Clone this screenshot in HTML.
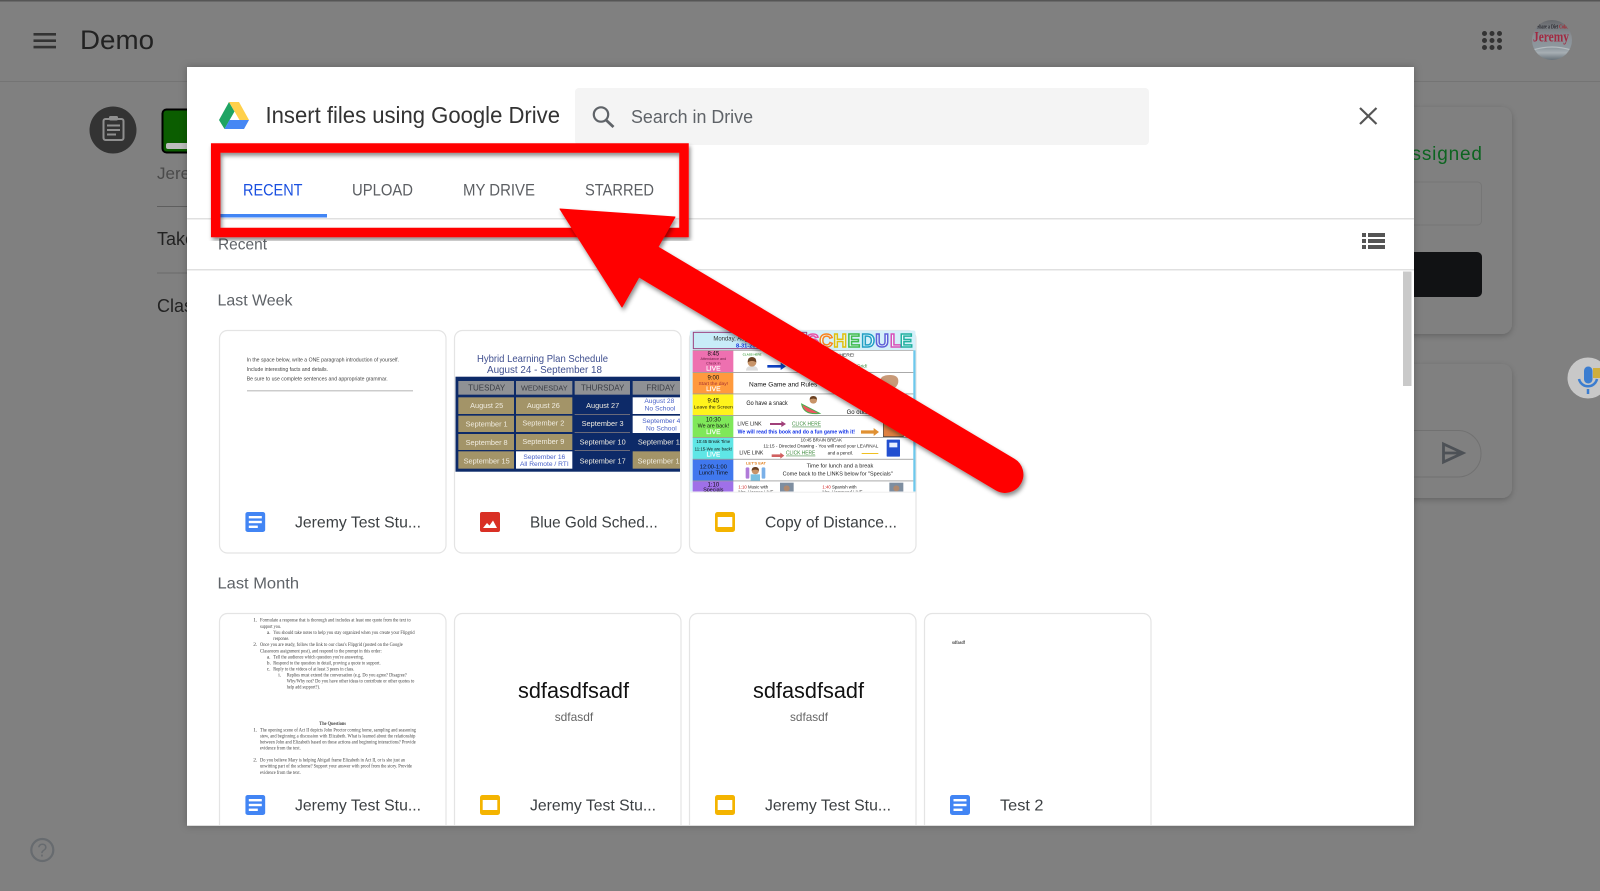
<!DOCTYPE html>
<html lang="en">
<head>
<meta charset="utf-8">
<title>Insert files using Google Drive</title>
<style>
html,body{margin:0;padding:0;width:1600px;height:891px;overflow:hidden;background:#808080}
svg{display:block;font-family:"Liberation Sans",sans-serif}
</style>
</head>
<body>
<svg xmlns="http://www.w3.org/2000/svg" width="1600" height="891" viewBox="0 0 1600 891">
<defs>
<filter id="sh" x="-10%" y="-10%" width="120%" height="120%"><feDropShadow dx="1.5" dy="3" stdDeviation="2" flood-color="#000" flood-opacity=".45"/></filter>
<filter id="cs" x="-10%" y="-10%" width="120%" height="120%"><feDropShadow dx="0" dy="2" stdDeviation="3" flood-color="#000" flood-opacity=".22"/></filter>
<filter id="ds" x="-5%" y="-5%" width="110%" height="110%"><feDropShadow dx="0" dy="0" stdDeviation="4" flood-color="#000" flood-opacity=".25"/></filter>
<filter id="soft" x="-2%" y="-2%" width="104%" height="104%"><feGaussianBlur stdDeviation=".35"/></filter>
<clipPath id="dlg"><rect x="187" y="67" width="1227" height="758.500"/></clipPath>
<clipPath id="c2"><path d="M454 376h226v96h-226z"/></clipPath>
<clipPath id="c3"><path d="M29 515V39q0-8 8-8H699q8 0 8 8V515z"/></clipPath>
<clipPath id="av"><circle cx="1552" cy="40" r="20"/></clipPath>
<linearGradient id="ag" x1="0" y1="0" x2="0" y2="1"><stop offset="0" stop-color="#66686c"/><stop offset=".4" stop-color="#8a8f94"/><stop offset=".7" stop-color="#8e989f"/><stop offset=".82" stop-color="#a6aeb3"/><stop offset="1" stop-color="#667078"/></linearGradient>
<symbol id="doc" viewBox="0 0 20 20"><rect width="20" height="20" rx="2.500" fill="#4285f4"/><rect x="3.500" y="4" width="13" height="2.400" fill="#fff"/><rect x="3.500" y="8.800" width="13" height="2.400" fill="#fff"/><rect x="3.500" y="13.600" width="9" height="2.400" fill="#fff"/></symbol>
<symbol id="sl" viewBox="0 0 20 20"><rect width="20" height="20" rx="2.500" fill="#f4b400"/><rect x="2.700" y="5" width="14.600" height="10" fill="#fff"/></symbol>
<symbol id="im" viewBox="0 0 20 20"><rect width="20" height="20" rx="2" fill="#d93025"/><path d="M3 16l4-5 2.500 2.500L13 8.500 17 16z" fill="#fff"/></symbol>
</defs>

<!-- page background -->
<rect width="1600" height="891" fill="#808080"/>
<rect width="1600" height="1.500" fill="#555"/>
<rect y="81" width="1600" height="1" fill="#747474"/>
<g fill="#333"><rect x="33.500" y="33" width="22.500" height="2.600"/><rect x="33.500" y="39.400" width="22.500" height="2.600"/><rect x="33.500" y="45.800" width="22.500" height="2.600"/></g>
<text x="80" y="49" font-size="27" fill="#222" textLength="74" lengthAdjust="spacingAndGlyphs">Demo</text>
<g fill="#333"><circle cx="1484.500" cy="33.500" r="2.500"/><circle cx="1492" cy="33.500" r="2.500"/><circle cx="1499.500" cy="33.500" r="2.500"/><circle cx="1484.500" cy="40.500" r="2.500"/><circle cx="1492" cy="40.500" r="2.500"/><circle cx="1499.500" cy="40.500" r="2.500"/><circle cx="1484.500" cy="47.500" r="2.500"/><circle cx="1492" cy="47.500" r="2.500"/><circle cx="1499.500" cy="47.500" r="2.500"/></g>
<circle cx="1552" cy="40" r="20" fill="url(#ag)"/>
<g clip-path="url(#av)"><path d="M1533 50q19 -6 38 0" stroke="#b5bcc0" stroke-width="1.200" fill="none"/><text x="1537" y="28.500" font-size="6" font-weight="bold" font-family="'Liberation Serif',serif" fill="#2a2a30" textLength="31" lengthAdjust="spacingAndGlyphs">Share a Diet <tspan fill="#a8242e">Coke</tspan></text><text x="1533" y="41.500" font-size="15" font-weight="bold" font-family="'Liberation Serif',serif" fill="#a02a42" textLength="36" lengthAdjust="spacingAndGlyphs">Jeremy</text></g>

<circle cx="113" cy="130" r="23.500" fill="#333"/>
<g fill="none" stroke="#8f8f8f" stroke-width="2"><rect x="103.500" y="119" width="20" height="21" rx="2"/></g>
<rect x="109" y="116" width="9" height="4.500" rx="1.500" fill="#8f8f8f"/>
<g fill="#8f8f8f"><rect x="107" y="124.500" width="13" height="2"/><rect x="107" y="129" width="13" height="2"/><rect x="107" y="133.500" width="9" height="2"/></g>
<rect x="162.500" y="109.500" width="40" height="43" rx="4" fill="#0b5d00" stroke="#000" stroke-width="2"/>
<rect x="166" y="143" width="34" height="6" rx="2" fill="#bdbdbd"/>
<text x="157" y="179" font-size="17" fill="#4a4a4a">Jeremy</text>
<rect x="157" y="206" width="40" height="1" fill="#5e5e5e"/>
<text x="157" y="245" font-size="18" fill="#222">Take</text>
<rect x="157" y="272.500" width="40" height="1" fill="#6a6a6a"/>
<text x="157" y="312" font-size="18" fill="#222">Class</text>

<circle cx="42.300" cy="850" r="11" fill="none" stroke="#676b6f" stroke-width="2.200"/>
<text x="42.300" y="856.500" font-size="18" fill="#676b6f" text-anchor="middle">?</text>

<!-- right cards -->
<rect x="1380" y="107" width="132" height="227" rx="10" fill="#808080" filter="url(#cs)"/>
<text x="1398" y="160" font-size="19" fill="#0d6420" textLength="84" lengthAdjust="spacing">Assigned</text>
<rect x="1390" y="182" width="91.500" height="43" rx="4" fill="none" stroke="#767676"/>
<rect x="1390" y="252" width="92" height="45" rx="5" fill="#111214"/>
<rect x="1380" y="364" width="132" height="134" rx="10" fill="#808080" filter="url(#cs)"/>
<rect x="1380" y="430.500" width="101" height="46.500" rx="23" fill="none" stroke="#717171"/>
<path d="M1443.500 444L1463 453L1443.500 462ZM1443.500 453H1463" fill="none" stroke="#4d5156" stroke-width="2.800" stroke-linejoin="miter"/>
<circle cx="1588" cy="378" r="20.500" fill="#c8c8c8"/>
<rect x="1593" y="368" width="7" height="10" fill="#cfae3d"/>
<rect x="1584" y="366.500" width="8.500" height="17" rx="4.250" fill="#3b7dd0"/>
<path d="M1579 379a9.200 9.200 0 0 0 18 0M1588 389v5" fill="none" stroke="#3b7dd0" stroke-width="2.500"/>

<!-- dialog -->
<rect x="187" y="67" width="1227" height="759" fill="#fff" filter="url(#ds)"/>
<g clip-path="url(#dlg)">
<path d="M229 102L234.500 111.500L224.500 129L219 120Z" fill="#1fa463"/>
<path d="M229 102H239L249 120H239.500Z" fill="#ffd04b"/>
<path d="M229.500 120H249L244 129H224.500Z" fill="#4687f4"/>
<text x="265.500" y="123" font-size="23" fill="#333" textLength="294.500" lengthAdjust="spacingAndGlyphs">Insert files using Google Drive</text>
<rect x="575" y="88" width="574" height="57" rx="4" fill="#f4f4f4"/>
<circle cx="601" cy="114.500" r="7.200" fill="none" stroke="#5f6368" stroke-width="2.200"/>
<path d="M606 120L613.500 127" stroke="#5f6368" stroke-width="2.800"/>
<text x="631" y="123" font-size="18" fill="#5f6368" textLength="122" lengthAdjust="spacingAndGlyphs">Search in Drive</text>
<path d="M1360 108L1376.500 124M1376.500 108L1360 124" stroke="#555" stroke-width="2.200"/>

<g font-size="17" fill="#5c5f63">
<text x="243" y="195.500" fill="#1a50e0" textLength="59.500" lengthAdjust="spacingAndGlyphs">RECENT</text>
<text x="352" y="195.500" textLength="61" lengthAdjust="spacingAndGlyphs">UPLOAD</text>
<text x="463" y="195.500" textLength="72" lengthAdjust="spacingAndGlyphs">MY DRIVE</text>
<text x="585" y="195.500" textLength="69" lengthAdjust="spacingAndGlyphs">STARRED</text>
</g>
<rect x="187" y="218" width="1227" height="1.500" fill="#e0e0e0"/>
<rect x="220" y="214" width="107" height="3.500" fill="#4285f4"/>
<text x="218" y="249.500" font-size="16" fill="#5f6368" textLength="49" lengthAdjust="spacingAndGlyphs">Recent</text>
<g fill="#555"><rect x="1362" y="233" width="4" height="4"/><rect x="1368" y="233" width="17" height="4"/><rect x="1362" y="239" width="4" height="4"/><rect x="1368" y="239" width="17" height="4"/><rect x="1362" y="245" width="4" height="4"/><rect x="1368" y="245" width="17" height="4"/></g>
<rect x="187" y="269" width="1227" height="1.500" fill="#e0e0e0"/>
<rect x="1403" y="271.500" width="8.500" height="114.500" fill="#c9c9c9"/>

<g font-size="16" fill="#5f6368">
<text x="217.500" y="305.500" textLength="75" lengthAdjust="spacingAndGlyphs">Last Week</text>
<text x="217.500" y="588.500" textLength="81.500" lengthAdjust="spacingAndGlyphs">Last Month</text>
</g>

<!-- cards outlines -->
<g fill="#fff" stroke="#e4e4e4" stroke-width="1.200">
<rect x="219.500" y="330.500" width="226.500" height="222.500" rx="8"/>
<rect x="454.500" y="330.500" width="226.500" height="222.500" rx="8"/>
<rect x="689.500" y="330.500" width="226.500" height="222.500" rx="8"/>
<rect x="219.500" y="613.500" width="226.500" height="240" rx="8"/>
<rect x="454.500" y="613.500" width="226.500" height="240" rx="8"/>
<rect x="689.500" y="613.500" width="226.500" height="240" rx="8"/>
<rect x="924.500" y="613.500" width="226.500" height="240" rx="8"/>
</g>

<!-- card 1 preview -->
<g font-size="5.500" fill="#444" filter="url(#soft)">
<text x="246.700" y="361.700" textLength="152.300" lengthAdjust="spacingAndGlyphs">In the space below, write a ONE paragraph introduction of yourself.</text>
<text x="246.700" y="371" textLength="81.300" lengthAdjust="spacingAndGlyphs">Include interesting facts and details.</text>
<text x="246.700" y="380.500" textLength="141" lengthAdjust="spacingAndGlyphs">Be sure to use complete sentences and appropriate grammar.</text>
</g>
<rect x="247" y="390" width="166" height="1.500" fill="#ccc"/>

<!-- card 2 preview -->
<g filter="url(#soft)">
<g clip-path="url(#c2)">
<rect x="455.500" y="376.700" width="226" height="95" fill="#0e2a68"/>
</g>
<text x="477" y="362" font-size="10.500" fill="#3f4f8f" textLength="131" lengthAdjust="spacingAndGlyphs">Hybrid Learning Plan Schedule</text>
<text x="487" y="373" font-size="10.500" fill="#3f4f8f" textLength="115" lengthAdjust="spacingAndGlyphs">August 24 - September 18</text>
<g clip-path="url(#c2)"><g transform="translate(210 320) scale(.33333)" font-size="22">
<g fill="#8f9195"><rect x="745" y="183" width="167" height="41"/><rect x="918" y="183" width="169" height="41"/><rect x="1094" y="183" width="166" height="41"/><rect x="1268" y="183" width="150" height="41"/></g>
<g fill="#3a3d44" text-anchor="middle" font-size="24"><text x="830" y="211">TUESDAY</text><text x="1003" y="211" font-size="22">WEDNESDAY</text><text x="1178" y="211">THURSDAY</text><text x="1352" y="211">FRIDAY</text></g>
<g fill="#a39468"><rect x="745" y="232" width="167" height="50"/><rect x="745" y="287" width="167" height="49"/><rect x="745" y="342" width="167" height="48"/><rect x="745" y="394" width="167" height="52"/><rect x="918" y="232" width="169" height="50"/><rect x="918" y="287" width="169" height="49"/><rect x="918" y="342" width="169" height="48"/><rect x="1268" y="394" width="150" height="52"/></g>
<g fill="#fff"><rect x="918" y="394" width="169" height="52"/><rect x="1268" y="232" width="150" height="50"/><rect x="1268" y="287" width="150" height="52"/></g>
<g fill="#6a6a7a"><rect x="1094" y="282" width="166" height="3"/><rect x="1094" y="336" width="166" height="3"/><rect x="1094" y="390" width="166" height="3"/></g>
<g fill="#f0ece0" text-anchor="middle">
<text x="830" y="264">August 25</text><text x="830" y="319">September 1</text><text x="830" y="375">September 8</text><text x="830" y="431">September 15</text>
<text x="1000" y="264">August 26</text><text x="1000" y="317">September 2</text><text x="1000" y="372">September 9</text>
<text x="1178" y="264">August 27</text><text x="1178" y="318">September 3</text><text x="1178" y="374">September 10</text><text x="1178" y="431">September 17</text>
<text x="1352" y="374">September 11</text><text x="1352" y="431">September 18</text>
</g>
<g fill="#4a62c8" text-anchor="middle" font-size="20">
<text x="1348" y="249">August 28</text><text x="1350" y="271">No School</text><text x="1354" y="309">September 4</text><text x="1354" y="332">No School</text><text x="1003" y="417">September 16</text><text x="1003" y="438">All Remote / RTI</text>
</g>
</g></g>
</g>

<!-- card 3 preview -->
<g filter="url(#soft)">
<g transform="translate(680 320) scale(.33333)" clip-path="url(#c3)">
<rect x="29" y="31" width="678" height="484" fill="#d5f0fa"/>
<rect x="40" y="37" width="340" height="49" fill="#c8ecf8" stroke="#9a3f7d" stroke-width="3"/>
<text x="100" y="62" font-size="18" fill="#333">Monday, August 31</text>
<text x="168" y="82" font-size="17" font-weight="bold" fill="#1030e0">8-31-20</text>
<g font-size="56" font-weight="bold" fill="#eafafd" stroke-width="4.500">
<text x="380" y="81" stroke="#e84fa6">S</text><text x="418" y="81" stroke="#f88520">C</text><text x="460" y="81" stroke="#e0c010">H</text><text x="503" y="81" stroke="#3fbb50">E</text><text x="544" y="81" stroke="#209fc4">D</text><text x="586" y="81" stroke="#5f5fd8">U</text><text x="630" y="81" stroke="#d850b8">L</text><text x="660" y="81" stroke="#20b0a0">E</text>
</g>
<rect x="38" y="91" width="662" height="424" fill="#fff"/>
<rect x="700" y="91" width="7" height="424" fill="#6cc8ec"/>
<rect x="38" y="92" width="122" height="65" fill="#ee70b0"/>
<rect x="38" y="158" width="122" height="63" fill="#ff9a3c"/>
<rect x="38" y="222" width="122" height="64" fill="#fff31a"/>
<rect x="38" y="287" width="122" height="65" fill="#7fe85a"/>
<rect x="38" y="353" width="122" height="64" fill="#5fe6e6"/>
<rect x="38" y="418" width="122" height="64" fill="#3f78ee"/>
<rect x="38" y="483" width="122" height="32" fill="#9f6fe8"/>
<g fill="#999"><rect x="38" y="90" width="662" height="2"/><rect x="38" y="156" width="662" height="2.500"/><rect x="38" y="220.500" width="662" height="2.500"/><rect x="38" y="285.500" width="662" height="2.500"/><rect x="38" y="351.500" width="662" height="2.500"/><rect x="38" y="416.500" width="662" height="2.500"/><rect x="38" y="481.500" width="662" height="2.500"/></g>
<g text-anchor="middle" fill="#111" font-size="18">
<text x="100" y="107">8:45</text><text x="100" y="120" font-size="11" fill="#6a1a40">Attendance and</text><text x="100" y="133" font-size="11" fill="#6a1a40">Check In</text><text x="100" y="151" font-size="20" fill="#fff" stroke="#fff" stroke-width=".5">LIVE</text>
<text x="100" y="178">9:00</text><text x="100" y="195" font-size="15" fill="#a33">Start the day!</text><text x="100" y="213" font-size="20" fill="#fff" stroke="#fff" stroke-width=".5">LIVE</text>
<text x="100" y="247">9:45</text><text x="100" y="265" font-size="15">Leave the Screen</text>
<text x="100" y="304">10:30</text><text x="100" y="322" font-size="16">We are back!</text><text x="100" y="342" font-size="20" fill="#fff" stroke="#fff" stroke-width=".5">LIVE</text>
<text x="100" y="369" font-size="13">10:45 Break Time</text><text x="100" y="392" font-size="13">11:15-We are back!</text><text x="100" y="410" font-size="19" fill="#fff" stroke="#fff" stroke-width=".5">LIVE</text>
<text x="100" y="445" font-size="17">12:00-1:00</text><text x="100" y="463" font-size="17">Lunch Time</text>
<text x="100" y="500">1:10</text><text x="100" y="515" font-size="16">Specials</text>
</g>
<text x="188" y="107" font-size="9" font-weight="bold" fill="#3a9a3a" textLength="57" lengthAdjust="spacingAndGlyphs">CLASS HERE</text>
<path d="M198 152q0-14 18-14t18 14z" fill="#ddd"/><circle cx="216" cy="127" r="13" fill="#c89468"/><path d="M203 127q0-16 13-16t13 16q-13-9-26 0z" fill="#6a4020"/>
<path d="M262 135h40v-7l16 11-16 11v-7h-40z" fill="#1040c0"/>
<text x="478" y="110" font-size="15" fill="#222">HERE!</text>
<text x="530" y="143" font-size="15" fill="#3a8a3a">Grid!</text>
<text x="207" y="200" font-size="20" fill="#111" textLength="205" lengthAdjust="spacingAndGlyphs">Name Game   and Rules</text>
<path d="M600 185q0-20 30-20q25 0 25 18q0 18-22 27q-22 3-33-25z" fill="#c89a78"/>
<text x="199" y="255" font-size="18" fill="#111" textLength="124" lengthAdjust="spacingAndGlyphs">Go have a snack</text>
<path d="M365 252q6 34 54 28z" fill="#ee5560" stroke="#4caf50" stroke-width="3"/><circle cx="400" cy="240" r="11" fill="#c89468"/><path d="M389 239q0-11 11-11t11 11q-11-6-22 0z" fill="#6a4020"/>
<text x="500" y="282" font-size="18" fill="#111">Go outside</text>
<text x="172" y="317" font-size="17" fill="#222" textLength="73" lengthAdjust="spacingAndGlyphs">LIVE LINK</text>
<path d="M270 309h34v-6l14 9-14 9v-6h-34z" fill="#a0407a"/>
<text x="336" y="317" font-size="17" fill="#3a8a3a" text-decoration="underline" textLength="87" lengthAdjust="spacingAndGlyphs">CLICK HERE</text>
<text x="173" y="341" font-size="17" font-weight="bold" fill="#1030e8" textLength="352" lengthAdjust="spacingAndGlyphs">We will read this book and do a fun game with it!</text>
<path d="M543 331h38v-7l16 12-16 12v-7h-38z" fill="#e09030"/>
<rect x="610" y="295" width="60" height="55" fill="#e08040" stroke="#444" stroke-width="2"/>
<text x="362" y="364" font-size="13" fill="#222" textLength="124" lengthAdjust="spacingAndGlyphs">10:45 BRAIN BREAK</text>
<text x="250" y="383" font-size="14" fill="#222" textLength="345" lengthAdjust="spacingAndGlyphs">11:15 - Directed Drawing - You will need your LEARNAL</text>
<text x="178" y="404" font-size="17" fill="#222" textLength="72" lengthAdjust="spacingAndGlyphs">LIVE LINK</text>
<path d="M275 403h26v-5l12 9-12 9v-5h-26z" fill="#d06060"/>
<text x="318" y="404" font-size="17" fill="#3a8a3a" text-decoration="underline" textLength="88" lengthAdjust="spacingAndGlyphs">CLICK HERE</text>
<text x="443" y="404" font-size="14" fill="#222" textLength="77" lengthAdjust="spacingAndGlyphs">and a pencil.</text>
<rect x="545" y="399" width="50" height="3" fill="#f0c020"/>
<rect x="620" y="359" width="40" height="51" rx="2" fill="#2050d0"/><rect x="628" y="368" width="24" height="14" fill="#e8eeff"/>
<text x="380" y="442" font-size="17" fill="#222" textLength="200" lengthAdjust="spacingAndGlyphs">Time for lunch and a break</text>
<text x="308" y="466" font-size="17" fill="#222" textLength="330" lengthAdjust="spacingAndGlyphs">Come back to the LINKS below for "Specials"</text>
<text x="198" y="434" font-size="11" font-weight="bold" fill="#e08020" textLength="60" lengthAdjust="spacingAndGlyphs">LET'S EAT</text>
<rect x="197" y="442" width="11" height="34" rx="4" fill="#b07ad8"/><rect x="245" y="442" width="11" height="34" rx="4" fill="#7ab0e8"/>
<circle cx="226" cy="452" r="11" fill="#c89468"/><path d="M215 452q0-11 11-11t11 11q-11-6-22 0z" fill="#6a4020"/><rect x="212" y="463" width="28" height="19" fill="#7ac0e0"/>
<text x="175" y="506" font-size="13" fill="#222"><tspan fill="#d02020">1:10</tspan> Music with</text>
<text x="175" y="520" font-size="13" fill="#222">Mrs. Hansen LIVE</text>
<rect x="300" y="488" width="41" height="30" fill="#7e8ea0"/><circle cx="320" cy="505" r="9" fill="#b08a70"/>
<text x="427" y="506" font-size="13" fill="#222"><tspan fill="#d02020">1:40</tspan> Spanish with</text>
<text x="427" y="520" font-size="13" fill="#222">Mrs. Hammond LIVE</text>
<rect x="628" y="488" width="42" height="30" fill="#7e8ea0"/><circle cx="649" cy="505" r="9" fill="#b08a70"/>
</g>
</g>
<rect x="690.500" y="491.700" width="225" height="1" fill="#eee"/>

<!-- row 2 previews -->
<g font-family="'Liberation Serif',serif" font-size="5.500" fill="#444" filter="url(#soft)">
<text x="253.300" y="621.700">1.</text><text x="260" y="621.700" textLength="150.700" lengthAdjust="spacingAndGlyphs">Formulate a response that is thorough and includes at least one quote from the text to</text>
<text x="260" y="628" textLength="21" lengthAdjust="spacingAndGlyphs">support you.</text>
<text x="266.700" y="634">a.</text><text x="273.300" y="634" textLength="141.300" lengthAdjust="spacingAndGlyphs">You should take notes to help you stay organized when you create your Flipgrid</text>
<text x="273.300" y="640" textLength="16" lengthAdjust="spacingAndGlyphs">response.</text>
<text x="253.300" y="646">2.</text><text x="260" y="646" textLength="142.700" lengthAdjust="spacingAndGlyphs">Once you are ready, follow the link to our class's Flipgrid (posted on the Google</text>
<text x="260" y="652.300" textLength="121.700" lengthAdjust="spacingAndGlyphs">Classroom assignment post), and respond to the prompt in this order:</text>
<text x="266.700" y="658.300">a.</text><text x="273.300" y="658.300" textLength="90.700" lengthAdjust="spacingAndGlyphs">Tell the audience which question you're answering.</text>
<text x="266.700" y="664.300">b.</text><text x="273.300" y="664.300" textLength="107.300" lengthAdjust="spacingAndGlyphs">Respond to the question in detail, proving a quote to support.</text>
<text x="266.700" y="670.300">c.</text><text x="273.300" y="670.300" textLength="81" lengthAdjust="spacingAndGlyphs">Reply to the videos of at least 3 peers in class.</text>
<text x="278.300" y="676.700">i.</text><text x="286.700" y="676.700" textLength="120" lengthAdjust="spacingAndGlyphs">Replies must extend the conversation (e.g. Do you agree? Disagree?</text>
<text x="286.700" y="682.700" textLength="127.700" lengthAdjust="spacingAndGlyphs">Why/Why not? Do you have other ideas to contribute or other quotes to</text>
<text x="286.700" y="688.700" textLength="33.300" lengthAdjust="spacingAndGlyphs">help add support?).</text>
<text x="319.300" y="725" font-weight="bold" textLength="26.700" lengthAdjust="spacingAndGlyphs">The Questions</text>
<text x="253.300" y="731.300">1.</text><text x="260" y="731.300" textLength="156" lengthAdjust="spacingAndGlyphs">The opening scene of Act II depicts John Proctor coming home, sampling and seasoning</text>
<text x="260" y="737.300" textLength="155.300" lengthAdjust="spacingAndGlyphs">stew, and beginning a discussion with Elizabeth. What is learned about the relationship</text>
<text x="260" y="743.300" textLength="155.700" lengthAdjust="spacingAndGlyphs">between John and Elizabeth based on these actions and beginning interactions? Provide</text>
<text x="260" y="749.700" textLength="40.700" lengthAdjust="spacingAndGlyphs">evidence from the text.</text>
<text x="253.300" y="761.700">2.</text><text x="260" y="761.700" textLength="145" lengthAdjust="spacingAndGlyphs">Do you believe Mary is helping Abigail frame Elizabeth in Act II, or is she just an</text>
<text x="260" y="767.700" textLength="152" lengthAdjust="spacingAndGlyphs">unwitting part of the scheme? Support your answer with proof from the story. Provide</text>
<text x="260" y="774" textLength="40.700" lengthAdjust="spacingAndGlyphs">evidence from the text.</text>
</g>
<text x="518" y="698" font-size="22" fill="#111" textLength="111" lengthAdjust="spacingAndGlyphs">sdfasdfsadf</text>
<text x="554.700" y="721" font-size="12" fill="#666" textLength="38.500" lengthAdjust="spacingAndGlyphs">sdfasdf</text>
<text x="753" y="698" font-size="22" fill="#111" textLength="111" lengthAdjust="spacingAndGlyphs">sdfasdfsadf</text>
<text x="790" y="721" font-size="12" fill="#666" textLength="38" lengthAdjust="spacingAndGlyphs">sdfasdf</text>
<text x="952" y="644" font-size="4.500" font-weight="bold" fill="#444" textLength="13" lengthAdjust="spacingAndGlyphs">sdfasdf</text>

<!-- file rows -->
<use href="#doc" x="245.300" y="512" width="20" height="20"/>
<use href="#im" x="480" y="512" width="20" height="20"/>
<use href="#sl" x="715" y="512" width="20" height="20"/>
<use href="#doc" x="245.300" y="795" width="20" height="20"/>
<use href="#sl" x="480" y="795" width="20" height="20"/>
<use href="#sl" x="715" y="795" width="20" height="20"/>
<use href="#doc" x="950" y="795" width="20" height="20"/>
<g font-size="16" fill="#3c4043">
<text x="295" y="527.500" textLength="126" lengthAdjust="spacingAndGlyphs">Jeremy Test Stu...</text>
<text x="530" y="527.500" textLength="127.700" lengthAdjust="spacingAndGlyphs">Blue Gold Sched...</text>
<text x="765" y="527.500" textLength="132" lengthAdjust="spacingAndGlyphs">Copy of Distance...</text>
<text x="295" y="810.500" textLength="126" lengthAdjust="spacingAndGlyphs">Jeremy Test Stu...</text>
<text x="530" y="810.500" textLength="126" lengthAdjust="spacingAndGlyphs">Jeremy Test Stu...</text>
<text x="765" y="810.500" textLength="126" lengthAdjust="spacingAndGlyphs">Jeremy Test Stu...</text>
<text x="1000" y="810.500" textLength="43.500" lengthAdjust="spacingAndGlyphs">Test 2</text>
</g>
</g>
<rect x="187" y="825" width="1227" height="1" fill="#ddd"/>

<!-- red annotation box and arrow -->
<rect x="215.700" y="148" width="468.300" height="84.500" fill="none" stroke="#f00" stroke-width="9.500" filter="url(#sh)"/>
<g filter="url(#sh)">
<path d="M560 209L675 217L658 247L1014 459A17.500 17.500 0 0 1 996 490L639 277L622 307Z" fill="#f00" stroke="#f00" stroke-width="1" stroke-linejoin="round"/>
</g>
</svg>
</body>
</html>
